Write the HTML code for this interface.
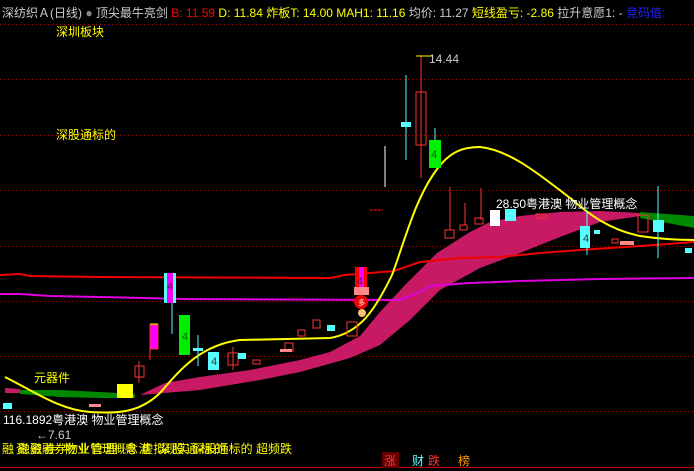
<!DOCTYPE html>
<html><head><meta charset="utf-8"><style>
html,body{margin:0;padding:0;background:#000;width:694px;height:471px;overflow:hidden;font-family:"Liberation Sans","Noto Sans CJK SC",sans-serif}
.t{position:absolute;font-size:12px;white-space:nowrap}
</style></head><body>
<svg width="694" height="471" style="position:absolute;left:0;top:0" font-family="Liberation Sans" font-size="11">
<g stroke="#a00" stroke-dasharray="1,3" stroke-width="1">
<line x1="0" y1="24.5" x2="694" y2="24.5"/>
<line x1="0" y1="79.5" x2="694" y2="79.5"/>
<line x1="0" y1="135.5" x2="694" y2="135.5"/>
<line x1="0" y1="190.5" x2="694" y2="190.5"/>
<line x1="0" y1="246.5" x2="694" y2="246.5"/>
<line x1="0" y1="301.5" x2="694" y2="301.5"/>
<line x1="0" y1="356.5" x2="694" y2="356.5"/>
<line x1="0" y1="411.5" x2="694" y2="411.5"/>
</g>
<line x1="0" y1="467.5" x2="694" y2="467.5" stroke="#c00"/>
<polygon points="20,390 60,390 100,392 135,394 135,398 100,398 60,397 20,394" fill="#080"/>
<polygon points="5,388 20,389 20,393 5,393" fill="#c81a64"/>
<polygon points="140,395 165,383 200,377 250,370 300,360 330,352 360,336 380,312 405,285 437,253 470,232 490,222 520,216 560,212 600,211 640,213 640,216 600,222 560,237 520,253 480,268 440,290 410,320 380,345 350,358 300,372 260,380 200,390" fill="#c81a64"/>
<polygon points="640,212 694,216 694,228 640,218" fill="#080"/>
<polyline points="0,275 20,274 30,276 100,277 330,278 345,275 394,271 420,262 460,258 500,257 540,253 580,250 640,246 694,242" fill="none" stroke="#f00000" stroke-width="2"/>
<polyline points="0,294 20,294 50,296 100,297 185,299 400,300 420,292 430,286 470,283 520,281 600,279 694,278" fill="none" stroke="#e000e0" stroke-width="2"/>
<path d="M5,377 C35,392 60,410 90,412 C120,414 140,412 160,393 C180,370 200,345 240,340 L330,338 C360,333 375,310 392,275 C405,240 415,200 435,172 C450,150 465,147 480,147 C510,150 540,175 570,198 C590,215 610,230 640,236 C660,239 680,240 694,240" fill="none" stroke="#ff0" stroke-width="2"/>
<g fill="none" stroke="#f33">
<rect x="416" y="92" width="10" height="53"/><line x1="421" y1="55" x2="421" y2="178"/>
<rect x="135" y="366" width="9" height="11"/><line x1="139" y1="361" x2="139" y2="383"/>
<rect x="228" y="353" width="10" height="12"/><line x1="233" y1="347" x2="233" y2="370"/>
<rect x="298" y="330" width="7" height="6"/><rect x="313" y="320" width="7" height="8"/>
<rect x="638" y="215" width="10" height="17"/><rect x="285" y="343" width="8" height="8"/>
<rect x="347" y="322" width="10" height="14"/><rect x="253" y="360" width="7" height="4"/>
<line x1="150" y1="348" x2="150" y2="360"/>
<line x1="450" y1="187" x2="450" y2="230"/><rect x="445" y="230" width="9" height="8"/>
<line x1="465" y1="203" x2="465" y2="225"/><rect x="460" y="225" width="7" height="5"/>
<line x1="481" y1="188" x2="481" y2="220"/><rect x="475" y="218" width="8" height="6"/>
<rect x="536" y="214" width="10" height="4"/><rect x="612" y="239" width="6" height="4"/>
</g>
<line x1="406" y1="75" x2="406" y2="160" stroke="#5ff"/>
<rect x="401" y="122" width="10" height="5" fill="#5ff"/>
<line x1="658" y1="186" x2="658" y2="258" stroke="#5ff"/>
<line x1="587" y1="210" x2="587" y2="255" stroke="#5ff"/>
<line x1="172" y1="300" x2="172" y2="334" stroke="#5ff"/>
<line x1="198" y1="335" x2="198" y2="366" stroke="#5ff"/>
<g fill="#5ff">
<rect x="580" y="226" width="10" height="22"/><rect x="505" y="209" width="11" height="12"/>
<rect x="653" y="220" width="11" height="12"/><rect x="208" y="352" width="11" height="18"/>
<rect x="238" y="353" width="8" height="6"/><rect x="193" y="348" width="10" height="3"/>
<rect x="3" y="403" width="9" height="6"/><rect x="685" y="248" width="7" height="5"/>
<rect x="327" y="325" width="8" height="6"/><rect x="594" y="230" width="6" height="4"/>
</g>
<rect x="429" y="140" width="12" height="28" fill="#0e0"/>
<line x1="435" y1="128" x2="435" y2="140" stroke="#5ff"/>
<rect x="179" y="315" width="11" height="40" fill="#0e0"/>
<rect x="490" y="210" width="10" height="16" fill="#fff"/>
<rect x="165" y="273" width="10" height="30" fill="#f0f"/><rect x="164" y="273" width="3" height="30" fill="#5ff"/><rect x="173" y="273" width="3" height="30" fill="#5ff"/>
<rect x="150" y="325" width="8" height="24" fill="#f0f" stroke="#f33"/>
<line x1="150" y1="324" x2="158" y2="324" stroke="#ff0"/>
<rect x="355" y="267" width="12" height="20" fill="#f00"/><rect x="359" y="267" width="5" height="20" fill="#f0f"/><rect x="354" y="287" width="15" height="8" fill="#f88"/>
<circle cx="361" cy="302" r="7" fill="#e00"/>
<text x="358" y="305" fill="#fff" font-size="7">多</text>
<circle cx="362" cy="313" r="4" fill="#f5c070"/>
<rect x="117" y="384" width="16" height="14" fill="#ff0"/>
<rect x="620" y="241" width="14" height="4" fill="#f88"/>
<rect x="280" y="349" width="12" height="3" fill="#f88"/>
<rect x="89" y="404" width="12" height="3" fill="#f88"/>
<line x1="385" y1="146" x2="385" y2="187" stroke="#fff"/>
<line x1="370" y1="210" x2="383" y2="210" stroke="#f22" stroke-dasharray="3,1"/>
<line x1="416" y1="56" x2="432" y2="56" stroke="#ff0"/>
<text x="182" y="340" fill="#060">4</text><text x="167" y="290" fill="#333">4</text>
<text x="431" y="158" fill="#060">4</text><text x="357" y="285" fill="#333">4</text>
<text x="583" y="242" fill="#333">4</text><text x="211" y="365" fill="#333">4</text>
<rect x="382" y="452" width="17" height="16" fill="#600"/>
</svg>
<div class="t" style="left:2px;top:4px;color:#ccc">深纺织Ａ(日线) <span style="color:#888">●</span> 顶尖最牛亮剑 <span style="color:#f00">B: 11.59</span> <span style="color:#ff0">D: 11.84 炸板T: 14.00 MAH1: 11.16</span> 均价: 11.27 <span style="color:#ff0">短线盈亏: -2.86</span> 拉升意愿1: - <span style="color:#22f">竞码值:</span></div>
<div class="t" style="left:56px;top:23px;color:#ff0">深圳板块</div>
<div class="t" style="left:56px;top:126px;color:#ff0">深股通标的</div>
<div class="t" style="left:34px;top:369px;color:#ff0">元器件</div>
<div class="t" style="left:429px;top:52px;color:#ccc">14.44</div>
<div class="t" style="left:496px;top:195px;color:#fff">28.50粤港澳 物业管理概念</div>
<div class="t" style="left:3px;top:411px;color:#fff">116.1892粤港澳 物业管理概念</div>
<div class="t" style="left:36px;top:428px;color:#ccc">←7.61</div>
<div class="t" style="left:2px;top:440px;color:#ff0;letter-spacing:2px">融资融券 物业管理 粤港 深股通标的</div>
<div class="t" style="left:18px;top:440px;color:#ff0">融资融券物业管理概念 虚拟现实 深股通标的 超频跌</div>
<div class="t" style="left:384px;top:452px;color:#f33">涨</div>
<div class="t" style="left:412px;top:452px;color:#5ff">财</div>
<div class="t" style="left:428px;top:452px;color:#f33">跌</div>
<div class="t" style="left:458px;top:452px;color:#f90">榜</div>
</body></html>
